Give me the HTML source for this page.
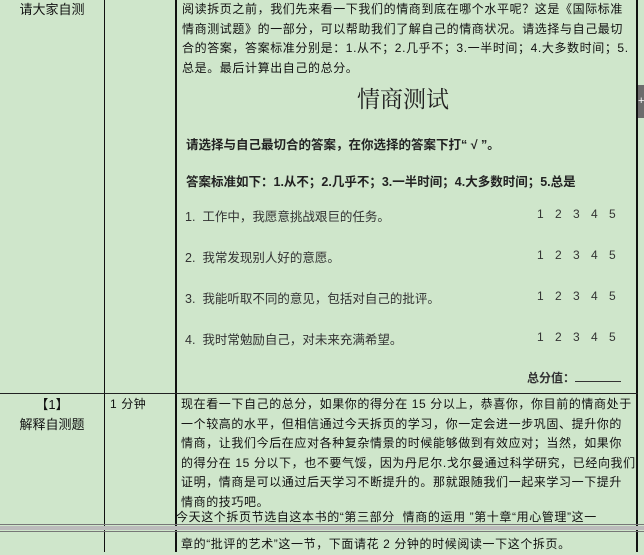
<!DOCTYPE html>
<html><head><meta charset="utf-8"><style>
*{margin:0;padding:0}
body{width:644px;height:552px;background:#cfe6cb;position:relative;overflow:hidden;font-family:"Liberation Sans","Noto Sans CJK SC",sans-serif;color:#111}
.a{position:absolute;white-space:nowrap}
.v{position:absolute;background:#111;width:1px}
.h{position:absolute;background:#222;height:1px}
.t{font-size:12px;letter-spacing:0.6px;line-height:19.5px}
.it{font-size:12.5px;color:#333}
.n{font-size:12px;color:#333;word-spacing:8px}
</style></head><body>
<div class="v" style="left:104px;top:0;height:552px"></div>
<div class="v" style="left:175px;top:0;height:552px;width:2px"></div>
<div class="v" style="left:636px;top:0;height:552px;width:2px"></div>
<div class="h" style="left:0;top:393px;width:638px"></div>
<div class="h" style="left:0;top:524px;width:644px;background:#777"></div>
<div class="h" style="left:0;top:526px;width:644px;background:#bbb;height:4px"></div>
<div class="h" style="left:0;top:531px;width:644px;background:#777"></div>
<div style="position:absolute;left:638px;top:85px;width:6px;height:33px;background:#6c6c6c;color:#fff;font-size:11px;line-height:33px;text-align:center">+</div>

<div class="a t" style="left:0;width:104px;text-align:center;top:0;font-size:13px;letter-spacing:0">请大家自测</div>
<div class="a t" style="left:182px;top:0">阅读拆页之前，我们先来看一下我们的情商到底在哪个水平呢？这是《国际标准<br>情商测试题》的一部分，可以帮助我们了解自己的情商状况。请选择与自己最切<br>合的答案，答案标准分别是：1.从不；2.几乎不；3.一半时间；4.大多数时间；5.<br>总是。最后计算出自己的总分。</div>
<div class="a" style="left:357px;top:81px;font-size:23px;font-family:'Liberation Serif','Noto Serif CJK SC',serif;color:#222">情商测试</div>
<div class="a" style="left:186px;top:134px;font-size:12.5px;font-weight:bold;color:#222">请选择与自己最切合的答案，在你选择的答案下打“ √ ”。</div>
<div class="a" style="left:186px;top:171px;font-size:12.5px;font-weight:bold;color:#222">答案标准如下：1.从不；2.几乎不；3.一半时间；4.大多数时间；5.总是</div>
<div class="a it" style="left:185px;top:206px">1.&nbsp; 工作中，我愿意挑战艰巨的任务。</div>
<div class="a it" style="left:185px;top:247px">2.&nbsp; 我常发现别人好的意愿。</div>
<div class="a it" style="left:185px;top:288px">3.&nbsp; 我能听取不同的意见，包括对自己的批评。</div>
<div class="a it" style="left:185px;top:329px">4.&nbsp; 我时常勉励自己，对未来充满希望。</div>
<div class="a n" style="left:537px;top:207px">1 2 3 4 5</div>
<div class="a n" style="left:537px;top:248px">1 2 3 4 5</div>
<div class="a n" style="left:537px;top:289px">1 2 3 4 5</div>
<div class="a n" style="left:537px;top:330px">1 2 3 4 5</div>
<div class="a" style="left:527px;top:369px;font-size:12px;font-weight:bold;color:#333">总分值：<span style="display:inline-block;width:46px;border-bottom:1px solid #333;height:11px"></span></div>

<div class="a t" style="left:0;width:104px;text-align:center;top:395px;font-size:13px;letter-spacing:0">【1】<br>解释自测题</div>
<div class="a t" style="left:110px;top:395px">1 分钟</div>
<div class="a t" style="left:181px;top:395px">现在看一下自己的总分，如果你的得分在 15 分以上，恭喜你，你目前的情商处于<br>一个较高的水平，但相信通过今天拆页的学习，你一定会进一步巩固、提升你的<br>情商，让我们今后在应对各种复杂情景的时候能够做到有效应对；当然，如果你<br>的得分在 15 分以下，也不要气馁，因为丹尼尔.戈尔曼通过科学研究，已经向我们<br>证明，情商是可以通过后天学习不断提升的。那就跟随我们一起来学习一下提升<br>情商的技巧吧。</div>
<div class="a t" style="left:176px;top:508px">今天这个拆页节选自这本书的“第三部分&nbsp; 情商的运用 ”第十章“用心管理”这一</div>
<div class="a t" style="left:181px;top:535px">章的“批评的艺术”这一节，下面请花 2 分钟的时候阅读一下这个拆页。</div>
</body></html>
